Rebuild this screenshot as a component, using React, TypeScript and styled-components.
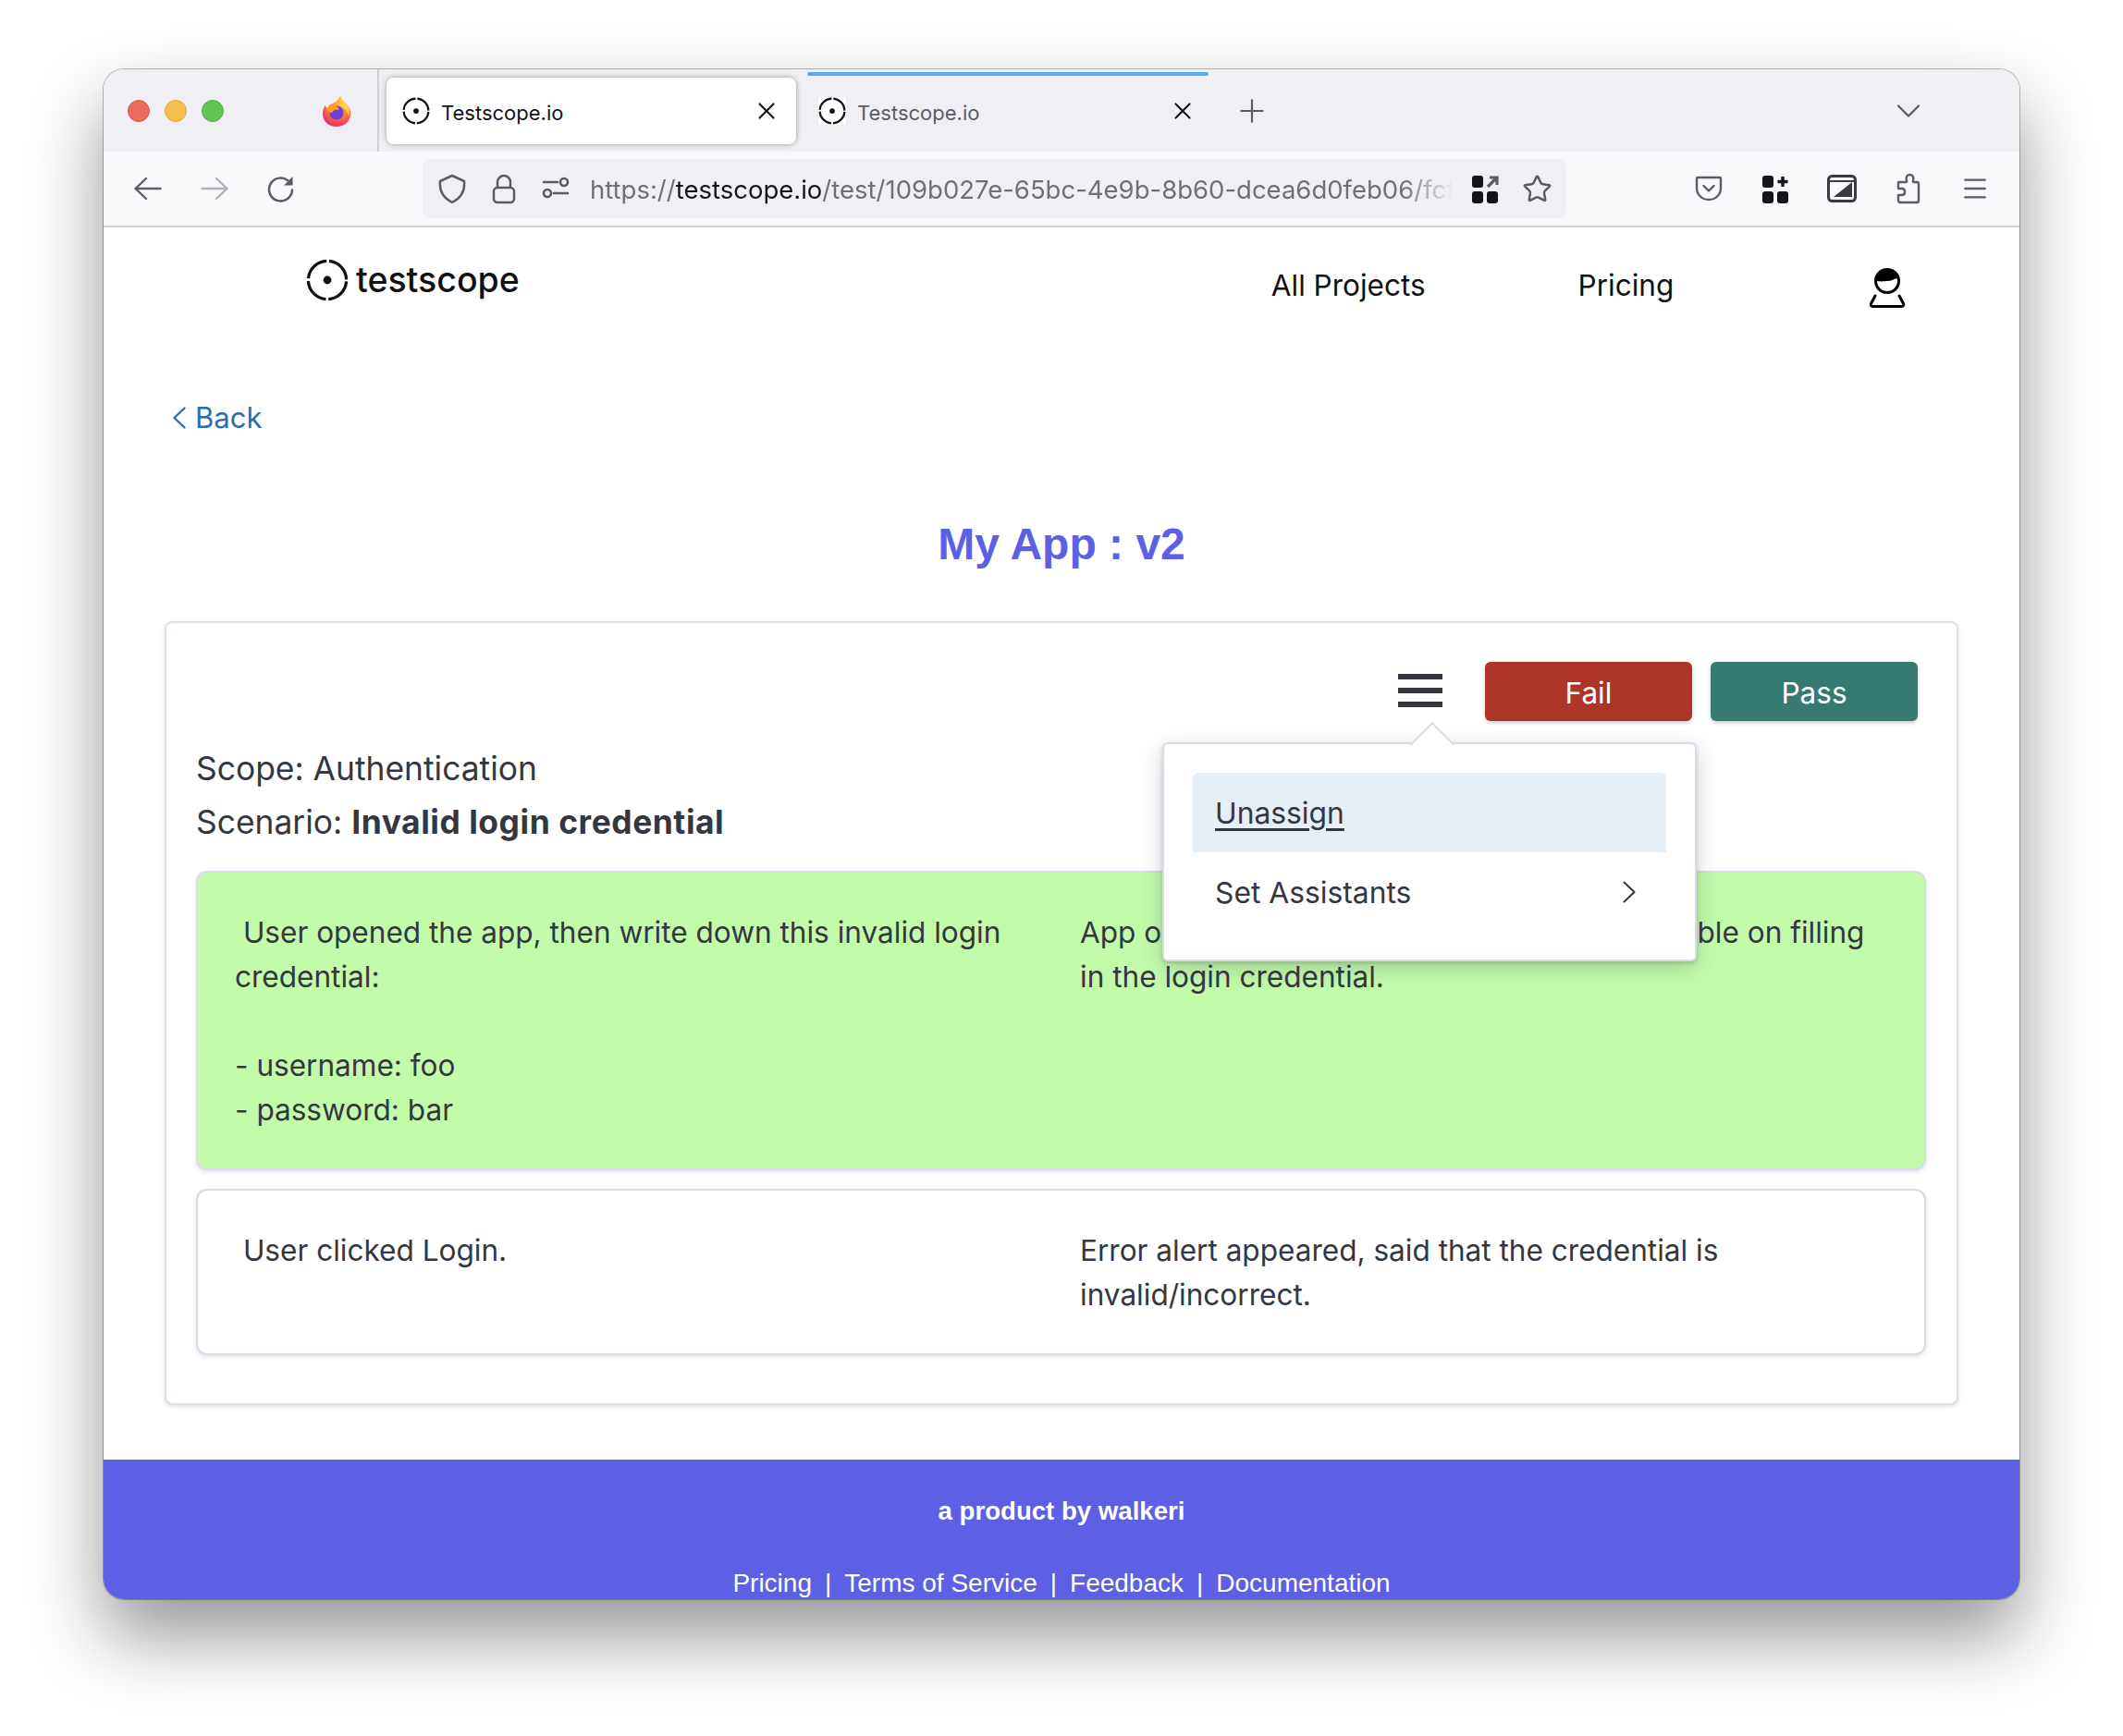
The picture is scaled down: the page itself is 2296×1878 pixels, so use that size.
import * as React from 'react';
import styled, { createGlobalStyle } from 'styled-components';
import { ChevronDown, Menu, Plus, Star, X } from 'lucide-react';

const GlobalStyle = createGlobalStyle`
  html, body {
    margin: 0;
    background: #fff;
  }
  body {
    font-family: Inter, "Liberation Sans", sans-serif;
    color: #343741;
  }
  * {
    box-sizing: border-box;
  }
`;

const Stage = styled.div`
  width: 2296px;
  height: 1878px;
  padding: 75px 112px 0;
  overflow: hidden;
  background: #fff;
`;

const BrowserWindow = styled.div`
  width: 2072px;
  height: 1655px;
  border-radius: 22px;
  overflow: hidden;
  background: #fff;
  display: flex;
  flex-direction: column;
  box-shadow: 0 0 0 1px rgba(0, 0, 0, 0.28), 0 40px 80px rgba(0, 0, 0, 0.42);
`;

const TabStrip = styled.div`
  height: 89px;
  flex: none;
  display: flex;
  align-items: center;
  background: #f0f0f4;
`;

const TitleBarLeft = styled.div`
  width: 298px;
  height: 100%;
  padding-left: 26px;
  display: flex;
  align-items: center;
  gap: 16px;
  border-right: 2px solid #cfcfd4;
`;

const TrafficLight = styled.span<{ $color: string; $edge: string }>`
  width: 24px;
  height: 24px;
  border-radius: 50%;
  background: ${p => p.$color};
  border: 1px solid ${p => p.$edge};
`;

const FoxSlot = styled.span`
  margin-left: 90px;
  display: flex;
`;

const Tab = styled.div<{ $active?: boolean }>`
  position: relative;
  height: 72px;
  display: flex;
  align-items: center;
  border-radius: 8px;
  font-size: 22px;
  ${p => p.$active ? `
    width: 443px;
    margin-left: 8px;
    padding: 0 17px 0 17px;
    background: #fff;
    color: #15141a;
    box-shadow: 0 0 6px rgba(0, 0, 0, 0.35);
  ` : `
    width: 434px;
    margin-left: 12px;
    padding: 0 13px 0 12px;
    color: #5b5b66;
  `}
`;

const LoadBar = styled.span`
  position: absolute;
  top: -6px;
  left: 0;
  right: 0;
  height: 4px;
  border-radius: 2px;
  background: #5aa9f8;
`;

const TabTitle = styled.span`
  margin-left: 12px;
  padding-top: 4px;
  flex: 1;
`;

const Favicon = styled.span`
  display: flex;
  background: #fff;
`;

const IconSlot = styled.span<{ $color?: string; $muted?: boolean }>`
  width: 36px;
  height: 36px;
  flex: none;
  display: flex;
  align-items: center;
  justify-content: center;
  color: ${p => p.$color || '#5b5b66'};
  opacity: ${p => p.$muted ? 0.45 : 1};
  svg {
    flex: none;
  }
`;

const StripButton = styled(IconSlot)`
  margin-left: 29px;
`;

const StripEnd = styled(IconSlot)`
  margin-left: auto;
  margin-right: 102px;
`;

const Toolbar = styled.div`
  height: 82px;
  flex: none;
  padding: 8px 0 0 30px;
  display: flex;
  align-items: flex-start;
  background: #f9f9fb;
  border-bottom: 2px solid #cfcfd8;
`;

const ToolGroup = styled.div`
  height: 64px;
  display: flex;
  align-items: center;
  gap: 36px;
`;

const UrlBar = styled.div`
  width: 1237px;
  height: 64px;
  margin: 0 136px 0 135px;
  padding: 0 14px;
  display: flex;
  align-items: center;
  gap: 20px;
  border-radius: 8px;
  background: #f0f0f4;
`;

const UrlText = styled.div`
  flex: 1;
  min-width: 0;
  margin: 2px -14px 0 -1px;
  white-space: nowrap;
  overflow: hidden;
  font-size: 27.5px;
  line-height: 36px;
  color: #6f6f78;
  -webkit-mask-image: linear-gradient(90deg, #000 93%, transparent 99%);
  mask-image: linear-gradient(90deg, #000 93%, transparent 99%);
  b {
    font-weight: 400;
    color: #15141a;
  }
`;

const NavBar = styled.nav`
  height: 100px;
  flex: none;
  padding: 34px 0 0 219px;
  display: flex;
  align-items: flex-start;
`;

const Logo = styled.div`
  display: flex;
  align-items: center;
  gap: 8px;
  font-size: 37.5px;
  font-weight: 500;
  line-height: 46px;
  color: #111;
`;

const NavLink = styled.a<{ $left: number }>`
  margin-left: ${p => p.$left}px;
  margin-top: 5px;
  font-size: 31.500px;
  line-height: 48px;
  color: #111;
`;

const UserSlot = styled.span`
  margin-left: 211px;
  margin-top: 10px;
  display: flex;
`;

const BackLink = styled.a`
  margin: 82px 0 0 75px;
  display: flex;
  align-items: center;
  gap: 10px;
  font-size: 31px;
  line-height: 48px;
  color: #2b6cb0;
`;

const PageTitle = styled.h1`
  margin: 81px 0 51px;
  font: 700 48px/64px "Liberation Sans", Arial, sans-serif;
  text-align: center;
  color: #5c60e4;
`;

const Card = styled.section`
  margin: 0 66px;
  padding: 42px 33px 52px 32px;
  border: 2px solid #dadde8;
  border-radius: 8px;
  box-shadow: 0 2px 4px rgba(160, 170, 200, 0.3);
`;

const ActionBar = styled.div`
  position: relative;
  height: 64px;
  margin-right: 9px;
  display: flex;
  align-items: center;
  justify-content: flex-end;
  gap: 20px;
`;

const Burger = styled.div`
  width: 48px;
  margin: -2px 26px 0 0;
  display: flex;
  flex-direction: column;
  gap: 9px;
  span {
    height: 6px;
    background: #343741;
  }
`;

const ActionButton = styled.button<{ $color: string }>`
  width: 224px;
  height: 64px;
  padding: 2px 0 0;
  border: 0;
  border-radius: 6px;
  background: ${p => p.$color};
  color: #fff;
  font: 400 31.500px Inter, sans-serif;
  box-shadow: 0 2px 4px rgba(0, 0, 0, 0.2);
`;

const DropMenu = styled.div`
  position: absolute;
  z-index: 2;
  top: 87px;
  right: 239px;
  width: 578px;
  height: 237px;
  padding: 31px;
  background: #fff;
  border: 2px solid #d9dce8;
  border-radius: 6px;
  box-shadow: 0 8px 24px rgba(50, 50, 70, 0.22), 0 2px 4px rgba(50, 50, 70, 0.2);
  &::before {
    content: '';
    position: absolute;
    top: -17px;
    left: 273px;
    width: 32px;
    height: 32px;
    background: #fff;
    border-top: 2px solid #d9dce8;
    border-left: 2px solid #d9dce8;
    transform: rotate(45deg);
  }
`;

const MenuItem = styled.div<{ $active?: boolean }>`
  position: relative;
  height: 86px;
  padding: 0 33px 0 24px;
  display: flex;
  align-items: center;
  justify-content: space-between;
  font-size: 31.800px;
  border-radius: 6px 6px 0 0;
  background: ${p => p.$active ? '#e6eef6' : 'transparent'};
  text-decoration: ${p => p.$active ? 'underline' : 'none'};
  text-underline-offset: 5px;
`;

const InfoLine = styled.div`
  font-size: 35.4px;
  line-height: 58px;
  strong {
    letter-spacing: 0.55px;
  }
`;

const Info = styled.div`
  margin: 23px 0 23px;
`;

const StepRow = styled.div<{ $done?: boolean }>`
  margin-bottom: 20px;
  padding: 41px 40px 39px 40px;
  display: grid;
  grid-template-columns: 873px 873px;
  column-gap: 41px;
  border: 2px solid #d9dce8;
  border-radius: 12px;
  background: ${p => p.$done ? '#c2fcaa' : '#fff'};
  box-shadow: 0 2px 4px rgba(160, 170, 200, 0.35);
  &:last-child {
    margin-bottom: 0;
  }
`;

const StepText = styled.div`
  font-size: 31.55px;
  line-height: 48px;
  white-space: pre-wrap;
`;

const Footer = styled.footer`
  flex: none;
  margin-top: 59px;
  height: 170px;
  padding-top: 38px;
  text-align: center;
  color: #fff;
  background: #5c60e4;
  font: 400 28px/36px "Liberation Sans", Arial, sans-serif;
`;

const FooterTitle = styled.div`
  font-size: 27.6px;
  font-weight: 700;
`;

const FooterLinks = styled.div`
  margin-top: 42px;
  display: flex;
  justify-content: center;
  gap: 14px;
`;

const ScopeIcon = ({ size }: { size: number }) => (
  <svg width={size} height={size} viewBox="0 0 48 48" fill="none">
    <circle cx="24" cy="24" r="21.5" stroke="#111" strokeWidth="3.4" strokeDasharray="30.77 3" strokeDashoffset="-1.5" />
    <circle cx="24" cy="24" r="4.6" fill="#111" />
  </svg>
);

const FirefoxIcon = () => (
  <svg width="32" height="34" viewBox="0 0 32 34">
    <defs>
      <radialGradient id="foxBody" cx="0.6" cy="0.25" r="0.85">
        <stop offset="0" stopColor="#ffbd2e" />
        <stop offset="0.55" stopColor="#ff7139" />
        <stop offset="1" stopColor="#e31587" />
      </radialGradient>
    </defs>
    <path d="M20 1c1 4 3 5 6 8 4 4 6 8 5 13-1 7-7 12-15 12C7 34 1 28 1 20c0-4 1-7 3-9 0 2 1 3 2 3 1-3 4-5 8-6 2-2 5-4 6-7z" fill="url(#foxBody)" />
    <path d="M20 1c1 4 3 5 6 8 4 4 5 9 3 14-1-5-4-9-9-12-1-3-1-7 0-10z" fill="#ffd43b" />
    <circle cx="16" cy="19" r="7.5" fill="#6b3fd4" />
    <path d="M5 14c3-3 8-4 11-2 2 1 3 3 2 4-4-1-6 1-7 3-3 0-5-2-6-5z" fill="#ff9a2e" />
  </svg>
);

const LineChevron = ({ left, width, color, stroke }: { left?: boolean; width: number; color: string; stroke: number }) => (
  <svg width={width} height="24" viewBox={`0 0 ${width} 24`} fill="none" stroke={color} strokeWidth={stroke} strokeLinecap="round" strokeLinejoin="round">
    <path d={left ? `M${width - 1.5} 1.500L1.500 12l${width - 3} 10.500` : `M1.500 1.500L${width - 1.5} 12 1.500 22.500`} />
  </svg>
);

const NavArrow = ({ right }: { right?: boolean }) => (
  <svg width="30" height="26" viewBox="0 0 30 26" fill="none" stroke="currentColor" strokeWidth="2.4" strokeLinecap="round" strokeLinejoin="round">
    <path d={right ? 'M1.500 13h27M17 2l11.500 11L17 24' : 'M28.500 13h-27M13 2L1.500 13 13 24'} />
  </svg>
);

const ReloadIcon = () => (
  <svg width="30" height="30" viewBox="0 0 30 30" fill="none">
    <path d="M27 16.500a12.500 12.500 0 1 1-5-10.500" stroke="currentColor" strokeWidth="2.500" strokeLinecap="round" />
    <path d="M27.500 2v9.500H18z" fill="currentColor" />
  </svg>
);

const ShieldIcon = () => (
  <svg width="30" height="33" viewBox="0 0 30 33" fill="none" stroke="currentColor" strokeWidth="2.500" strokeLinejoin="round">
    <path d="M15 2l13 6c1 10-3 18-13 23C5 26 1 18 2 8z" />
  </svg>
);

const LockIcon = () => (
  <svg width="26" height="33" viewBox="0 0 26 33" fill="none" stroke="currentColor" strokeWidth="2.500">
    <rect x="2" y="15" width="22" height="16" rx="4" />
    <path d="M6 15V9a7 7 0 0 1 14 0v6" />
  </svg>
);

const ReaderIcon = () => (
  <svg width="30" height="30" viewBox="0 0 30 30" fill="none" stroke="#5b5b66" strokeWidth="2.6" strokeLinecap="round">
    <path d="M2 8h15M13 20h15" />
    <circle cx="24" cy="8" r="4" />
    <circle cx="6" cy="20" r="4" />
  </svg>
);

const TilesIcon = ({ plus }: { plus?: boolean }) => (
  <svg width="30" height="32" viewBox="0 0 30 32">
    <g fill="#15141a">
      <rect x="1" y="2" width="12" height="13" rx="3" />
      <rect x="1" y="19" width="12" height="13" rx="3" />
      <rect x="17" y="19" width="12" height="13" rx="3" />
    </g>
    {plus ? (
      <path d="M23 3v11M17.5 8.500h11" stroke="#15141a" strokeWidth="3.4" />
    ) : (
      <path d="M18 14L27 5M20 4h8v8" stroke="#5b5b66" strokeWidth="3.2" fill="none" />
    )}
  </svg>
);

const PocketIcon = () => (
  <svg width="30" height="30" viewBox="0 0 30 30" fill="none" stroke="#5b5b66" strokeWidth="2.4" strokeLinecap="round" strokeLinejoin="round">
    <path d="M3 3h24a1 1 0 0 1 1 1v10c0 8-6 13-13 13S2 22 2 14V4a1 1 0 0 1 1-1z" />
    <path d="M9.500 12L15 17.500 20.500 12" />
  </svg>
);

const PipIcon = () => (
  <svg width="32" height="32" viewBox="0 0 32 32">
    <rect x="1.500" y="2.500" width="29" height="27" rx="4" fill="none" stroke="#3a3a42" strokeWidth="3" />
    <path d="M7 25L27 9v16z" fill="#3a3a42" />
    <path d="M3 8h26" stroke="#3a3a42" strokeWidth="2" />
  </svg>
);

const PuzzleIcon = () => (
  <svg width="28" height="34" viewBox="0 0 28 34" fill="none" stroke="currentColor" strokeWidth="2.400" strokeLinejoin="round">
    <path d="M3 10h8c1 0 1.500-1 1-2-1-2.500 0-6 3.500-6S20 5.500 19 8c-.5 1 0 2 1 2h3c1 0 2 1 2 2v18c0 1-1 2-2 2H5c-1 0-2-1-2-2v-6h4c4 0 4-7 0-7H3z" />
  </svg>
);

const UserIcon = () => (
  <svg width="40" height="44" viewBox="0 0 40 44" fill="none">
    <circle cx="20" cy="14" r="12.500" stroke="#000" strokeWidth="3" />
    <path d="M8 14C8 6 13 2 20 2s12 4 12 9c-5 0-6 3-11 3-4 0-6 1-13 0z" fill="#000" />
    <path d="M7 30l-4.500 8.500c-.6 1.500 0 3 2 3h31c2 0 2.600-1.500 2-3L33 30" stroke="#000" strokeWidth="3" strokeLinecap="round" />
  </svg>
);

export default function App() {
  return (
    <Stage>
      <GlobalStyle />
      <BrowserWindow>
        <TabStrip>
          <TitleBarLeft>
            <TrafficLight $color="#ed6a5e" $edge="#d9584d" />
            <TrafficLight $color="#f5bf4f" $edge="#dca63c" />
            <TrafficLight $color="#61c554" $edge="#52ad45" />
            <FoxSlot><FirefoxIcon /></FoxSlot>
          </TitleBarLeft>
          <Tab $active>
            <Favicon><ScopeIcon size={30} /></Favicon>
            <TabTitle>Testscope.io</TabTitle>
            <X size={30} strokeWidth={1.7} color="#15141a" />
          </Tab>
          <Tab>
            <LoadBar />
            <Favicon><ScopeIcon size={30} /></Favicon>
            <TabTitle>Testscope.io</TabTitle>
            <X size={30} strokeWidth={1.7} color="#15141a" />
          </Tab>
          <StripButton><Plus size={40} strokeWidth={1.3} /></StripButton>
          <StripEnd><ChevronDown size={44} strokeWidth={1.2} /></StripEnd>
        </TabStrip>
        <Toolbar>
          <ToolGroup>
            <IconSlot><NavArrow /></IconSlot>
            <IconSlot $muted><NavArrow right /></IconSlot>
            <IconSlot><ReloadIcon /></IconSlot>
          </ToolGroup>
          <UrlBar>
            <IconSlot><ShieldIcon /></IconSlot>
            <IconSlot><LockIcon /></IconSlot>
            <IconSlot><ReaderIcon /></IconSlot>
            <UrlText>https://<b>testscope.io</b>/test/109b027e-65bc-4e9b-8b60-dcea6d0feb06/fcf</UrlText>
            <IconSlot><TilesIcon /></IconSlot>
            <IconSlot><Star size={33} strokeWidth={1.8} /></IconSlot>
          </UrlBar>
          <ToolGroup>
            <IconSlot><PocketIcon /></IconSlot>
            <IconSlot><TilesIcon plus /></IconSlot>
            <IconSlot><PipIcon /></IconSlot>
            <IconSlot><PuzzleIcon /></IconSlot>
            <IconSlot><Menu size={32} strokeWidth={1.8} /></IconSlot>
          </ToolGroup>
        </Toolbar>
        <NavBar>
          <Logo><ScopeIcon size={46} />testscope</Logo>
          <NavLink $left={813}>All Projects</NavLink>
          <NavLink $left={165}>Pricing</NavLink>
          <UserSlot><UserIcon /></UserSlot>
        </NavBar>
        <BackLink><LineChevron left width={14} color="#2b6cb0" stroke={2.4} />Back</BackLink>
        <PageTitle>My App : v2</PageTitle>
        <Card>
          <ActionBar>
            <Burger><span /><span /><span /></Burger>
            <ActionButton $color="#ad3528">Fail</ActionButton>
            <ActionButton $color="#367a71">Pass</ActionButton>
            <DropMenu>
              <MenuItem $active>Unassign</MenuItem>
              <MenuItem>Set Assistants<LineChevron width={14} color="#343741" stroke={2} /></MenuItem>
            </DropMenu>
          </ActionBar>
          <Info>
            <InfoLine>Scope: Authentication</InfoLine>
            <InfoLine>Scenario: <strong>Invalid login credential</strong></InfoLine>
          </Info>
          <StepRow $done>
            <StepText>{' User opened the app, then write down this invalid login\ncredential:\n\n- username: foo\n- password: bar'}</StepText>
            <StepText>{'App opened the login page, and the user is able on filling\nin the login credential.'}</StepText>
          </StepRow>
          <StepRow>
            <StepText>{' User clicked Login.'}</StepText>
            <StepText>{'Error alert appeared, said that the credential is\ninvalid/incorrect.'}</StepText>
          </StepRow>
        </Card>
        <Footer>
          <FooterTitle>a product by walkeri</FooterTitle>
          <FooterLinks>
            <span>Pricing</span><span>|</span>
            <span>Terms of Service</span><span>|</span>
            <span>Feedback</span><span>|</span>
            <span>Documentation</span>
          </FooterLinks>
        </Footer>
      </BrowserWindow>
    </Stage>
  );
}
